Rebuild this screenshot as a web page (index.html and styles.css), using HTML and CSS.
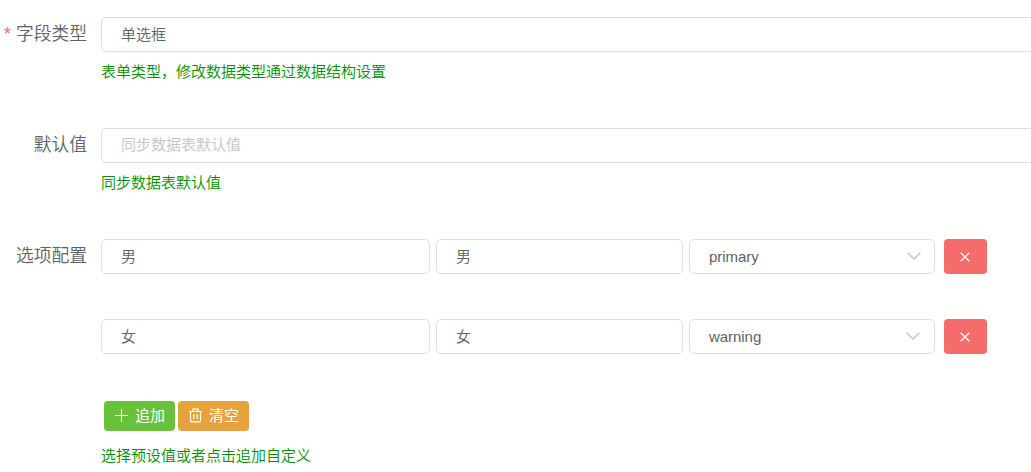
FILE: index.html
```html
<!DOCTYPE html>
<html lang="zh-CN">
<head>
    <meta charset="UTF-8">
    <meta name="viewport" content="width=device-width, initial-scale=1.0">
    <title>字段配置</title>
    <link rel="stylesheet" href="styles.css">
</head>
<body>
    <form class="field-form">
        <div class="form-item">
            <label class="form-label required" for="field-type">字段类型</label>
            <div class="form-content">
                <input class="form-input field-type" type="text" id="field-type" value="单选框" readonly>
                <p class="help">表单类型，修改数据类型通过数据结构设置</p>
            </div>
        </div>
        <div class="form-item">
            <label class="form-label" for="default-value">默认值</label>
            <div class="form-content">
                <input class="form-input" type="text" id="default-value" placeholder="同步数据表默认值">
                <p class="help">同步数据表默认值</p>
            </div>
        </div>
        <div class="form-item">
            <label class="form-label">选项配置</label>
            <div class="form-content">
                <div class="option-row">
                    <input class="form-input" type="text" value="男">
                    <input class="form-input" type="text" value="男">
                    <div class="select">
                        <span>primary</span>
                        <svg class="arrow" viewBox="0 0 14 8"><path d="M.7.7l6.3 6.3L13.3.7"/></svg>
                    </div>
                    <button type="button" class="btn btn-danger">
                        <svg class="icon-close" viewBox="0 0 10 10"><path d="M.7.7l8.6 8.6M9.3.7L.7 9.3"/></svg>
                    </button>
                </div>
                <div class="option-row">
                    <input class="form-input" type="text" value="女">
                    <input class="form-input" type="text" value="女">
                    <div class="select">
                        <span>warning</span>
                        <svg class="arrow arrow-left" viewBox="0 0 14 8"><path d="M.7.7l6.3 6.3L13.3.7"/></svg>
                    </div>
                    <button type="button" class="btn btn-danger">
                        <svg class="icon-close" viewBox="0 0 10 10"><path d="M.7.7l8.6 8.6M9.3.7L.7 9.3"/></svg>
                    </button>
                </div>
                <div class="actions">
                    <button type="button" class="btn btn-success">
                        <svg class="icon" viewBox="0 0 15 15"><path d="M7.5 1v13M1 7.5h13"/></svg>
                        <span>追加</span>
                    </button>
                    <button type="button" class="btn btn-warning">
                        <svg class="icon" viewBox="0 0 15 15"><path d="M.8 3.5h13.4M5 3.5V1.2h5v2.3M2.5 3.5v9.3q0 1 1 1h8q1 0 1-1V3.5M5.8 6v5.2M9.2 6v5.2"/></svg>
                        <span>清空</span>
                    </button>
                </div>
                <p class="help">选择预设值或者点击追加自定义</p>
            </div>
        </div>
    </form>
</body>
</html>
```
FILE: styles.css
```css
body {
    margin: 0;
    height: 472px;
    overflow: hidden;
    background-color: #fff;
    font-family: "Liberation Sans", "Noto Sans CJK SC", sans-serif;
    font-weight: 350;
    color: #606266;
}
.field-form {
    padding-top: 17px;
}
.form-item {
    display: flex;
    height: 111px;
}
.form-label {
    width: 87px;
    flex-shrink: 0;
    margin-right: 14px;
    text-align: right;
    font-size: 17.75px;
    line-height: 34px;
    white-space: nowrap;
}
.form-label.required::before {
    content: "*";
    margin-right: 5px;
    color: #f56c6c;
}
.form-content {
    flex: 1;
    min-width: 0;
}
.form-input,
.select {
    box-sizing: border-box;
    display: block;
    width: 100%;
    height: 35px;
    padding: 0 19px 2px;
    border: 1px solid #dcdfe6;
    border-radius: 5px;
    background-color: #fff;
    color: #606266;
    font-family: inherit;
    font-size: 15px;
    font-weight: inherit;
    outline: none;
}
/* The full-width fields run past the right edge */
.form-content > .form-input {
    width: calc(100% + 10px);
}
.field-type {
    border-color: #dcdee2;
}
.form-input::placeholder {
    color: #c0c4cc;
}
.help {
    margin: 10px 0 0;
    font-size: 15px;
    line-height: 20px;
    color: #008f00;
}
.option-row {
    display: grid;
    grid-template-columns: 329px 247px 246px 43px;
    column-gap: 6px;
    margin-bottom: 45px;
}
.select {
    display: flex;
    align-items: center;
    justify-content: space-between;
    padding: 0 13px 0 19px;
}
.select span {
    letter-spacing: -0.05px;
}
.arrow {
    width: 14px;
    height: 8px;
    margin-bottom: 2px;
    fill: none;
    stroke: #c0c4cc;
    stroke-width: 1.4;
}
.arrow-left {
    margin-right: 1px;
}
.btn {
    display: flex;
    align-items: center;
    justify-content: center;
    padding: 0;
    border: none;
    border-radius: 4px;
    color: #fff;
    font-family: inherit;
    font-size: 15px;
    cursor: pointer;
}
.btn svg {
    fill: none;
    stroke: #fff;
    stroke-width: 1.2;
}
.btn-danger {
    width: 43px;
    height: 35px;
    margin-left: 3px;
    background-color: #f56c6c;
}
.btn-danger .icon-close {
    width: 10px;
    height: 10px;
    margin-right: 1px;
    stroke-width: 1.3;
}
.actions {
    display: flex;
    gap: 3px;
    padding: 2px 0 0 3px;
}
.actions .btn {
    width: 71px;
    height: 30px;
    gap: 6px;
    padding-bottom: 3px;
}
.icon {
    width: 15px;
    height: 15px;
    margin-top: 2px;
}
.actions .btn-success {
    background-color: #67c23a;
}
.actions .btn-warning {
    background-color: #e6a23c;
}
.actions + .help {
    margin-top: 15px;
}
```
